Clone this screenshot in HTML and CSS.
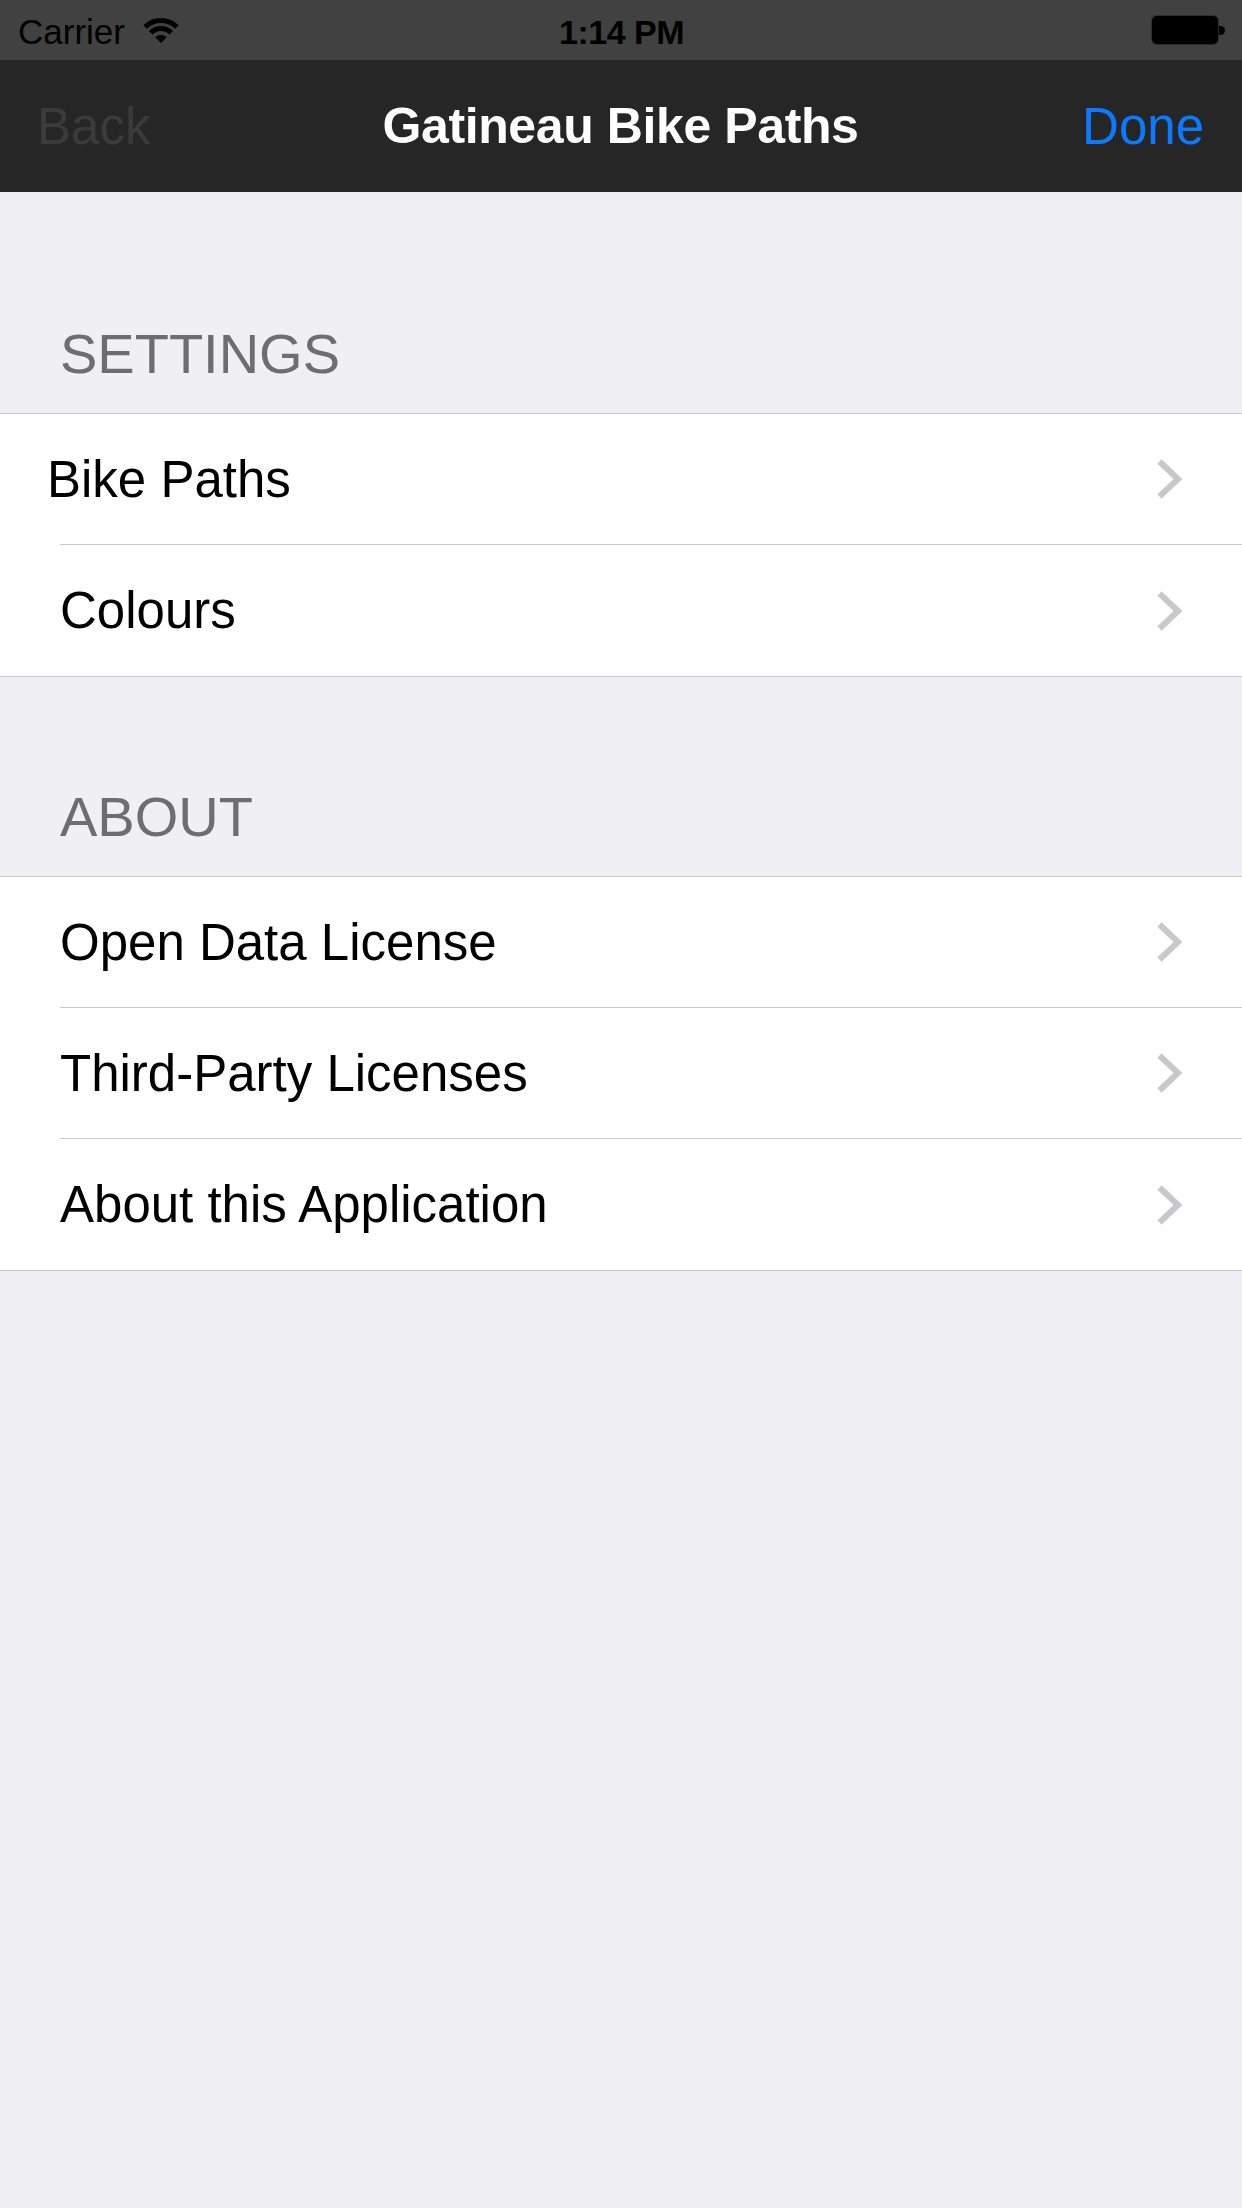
FILE: index.html
```html
<!DOCTYPE html>
<html lang="en">
<head>
<meta charset="utf-8">
<title>Gatineau Bike Paths</title>
<link rel="stylesheet" href="styles.css">
</head>
<body>
<div class="screen">
  <div class="status-bar">
    <div class="status-left">
      <span class="carrier">Carrier</span>
      <svg class="wifi" width="38" height="27" viewBox="0 0 38 27">
        <path d="M3.1 10.1 A22.5 22.5 0 0 1 34.9 10.1" fill="none" stroke="#000" stroke-width="5"/>
        <path d="M8.75 15.75 A14.5 14.5 0 0 1 29.25 15.75" fill="none" stroke="#000" stroke-width="5"/>
        <path d="M19 26 L13.34 20.34 A8 8 0 0 1 24.66 20.34 Z" fill="#000"/>
      </svg>
    </div>
    <div class="status-time">1:14 PM</div>
    <div class="status-right">
      <div class="battery"><div class="battery-body"></div><div class="battery-nub"></div></div>
    </div>
  </div>

  <div class="nav-bar">
    <div class="nav-back">Back</div>
    <div class="nav-title">Gatineau Bike Paths</div>
    <div class="nav-done">Done</div>
  </div>

  <div class="content">
    <div class="section-header section-header--first">SETTINGS</div>
    <div class="group">
      <div class="row">
        <div class="row-inner">
          <span class="row-label row-label--offset">Bike Paths</span>
          <svg class="chevron" width="26" height="40" viewBox="0 0 26 40"><polyline points="2.5,2.5 21,20 2.5,37.5" fill="none" stroke="#c7c7cc" stroke-width="6"/></svg>
        </div>
      </div>
      <div class="row">
        <div class="row-inner">
          <span class="row-label">Colours</span>
          <svg class="chevron" width="26" height="40" viewBox="0 0 26 40"><polyline points="2.5,2.5 21,20 2.5,37.5" fill="none" stroke="#c7c7cc" stroke-width="6"/></svg>
        </div>
      </div>
    </div>

    <div class="section-header">ABOUT</div>
    <div class="group">
      <div class="row">
        <div class="row-inner">
          <span class="row-label">Open Data License</span>
          <svg class="chevron" width="26" height="40" viewBox="0 0 26 40"><polyline points="2.5,2.5 21,20 2.5,37.5" fill="none" stroke="#c7c7cc" stroke-width="6"/></svg>
        </div>
      </div>
      <div class="row">
        <div class="row-inner">
          <span class="row-label">Third-Party Licenses</span>
          <svg class="chevron" width="26" height="40" viewBox="0 0 26 40"><polyline points="2.5,2.5 21,20 2.5,37.5" fill="none" stroke="#c7c7cc" stroke-width="6"/></svg>
        </div>
      </div>
      <div class="row">
        <div class="row-inner">
          <span class="row-label">About this Application</span>
          <svg class="chevron" width="26" height="40" viewBox="0 0 26 40"><polyline points="2.5,2.5 21,20 2.5,37.5" fill="none" stroke="#c7c7cc" stroke-width="6"/></svg>
        </div>
      </div>
    </div>
  </div>
</div>
</body>
</html>
```

FILE: styles.css
```css
* { box-sizing: border-box; }

html, body {
  margin: 0;
  padding: 0;
}

body {
  width: 1242px;
  height: 2208px;
  background: #efeff4;
  font-family: "Liberation Sans", Arial, Helvetica, sans-serif;
  overflow: hidden;
}

.screen {
  width: 1242px;
  min-height: 2208px;
  background: #efeff4;
}

/* Status bar */
.status-bar {
  height: 60px;
  background: #414141;
  display: grid;
  grid-template-columns: 1fr auto 1fr;
  align-items: center;
  padding: 3px 17px 0 18px;
  color: #000;
}

.status-left {
  display: flex;
  align-items: center;
  gap: 17px;
}

.carrier {
  font-size: 35px;
  line-height: 40px;
}

.wifi {
  display: block;
  margin-top: -2px;
}

.status-time {
  font-size: 34px;
  font-weight: bold;
  line-height: 40px;
  letter-spacing: -0.5px;
}

.status-right {
  display: flex;
  justify-content: flex-end;
}

.battery {
  display: flex;
  align-items: center;
  margin-top: -3px;
}

.battery-body {
  width: 66px;
  height: 28px;
  background: #000;
  border-radius: 5px;
  box-shadow: 0 0 0 1px #2c2c2c;
}

.battery-nub {
  width: 6px;
  height: 9px;
  background: #000;
  border-radius: 0 5px 5px 0;
  margin-left: 1px;
}

/* Navigation bar */
.nav-bar {
  height: 132px;
  background: #262626;
  display: grid;
  grid-template-columns: 1fr auto 1fr;
  align-items: center;
  padding: 0 38px 0 37px;
}

.nav-back {
  font-size: 51px;
  color: #3b3b3b;
}

.nav-title {
  font-size: 50px;
  font-weight: bold;
  color: #ffffff;
  letter-spacing: -0.4px;
}

.nav-done {
  font-size: 51px;
  color: #0a7aff;
  text-align: right;
}

/* Content */
.section-header {
  height: 199px;
  display: flex;
  align-items: flex-end;
  padding: 0 0 31px 60px;
  font-size: 56px;
  line-height: 56px;
  color: #6d6d72;
}

.section-header--first {
  height: 221px;
}

.group {
  background: #ffffff;
  border-top: 1px solid #c8c7cc;
  border-bottom: 1px solid #c8c7cc;
}

.row {
  padding-left: 60px;
}

.row-inner {
  height: 131px;
  display: flex;
  align-items: center;
  justify-content: space-between;
  padding-right: 60px;
  border-bottom: 1px solid #c8c7cc;
}

.row:last-child .row-inner {
  border-bottom: none;
}

.row-label {
  font-size: 51px;
  color: #000;
}

.row-label--offset {
  margin-left: -13px;
}

.chevron {
  display: block;
  margin-right: -1px;
}
```
